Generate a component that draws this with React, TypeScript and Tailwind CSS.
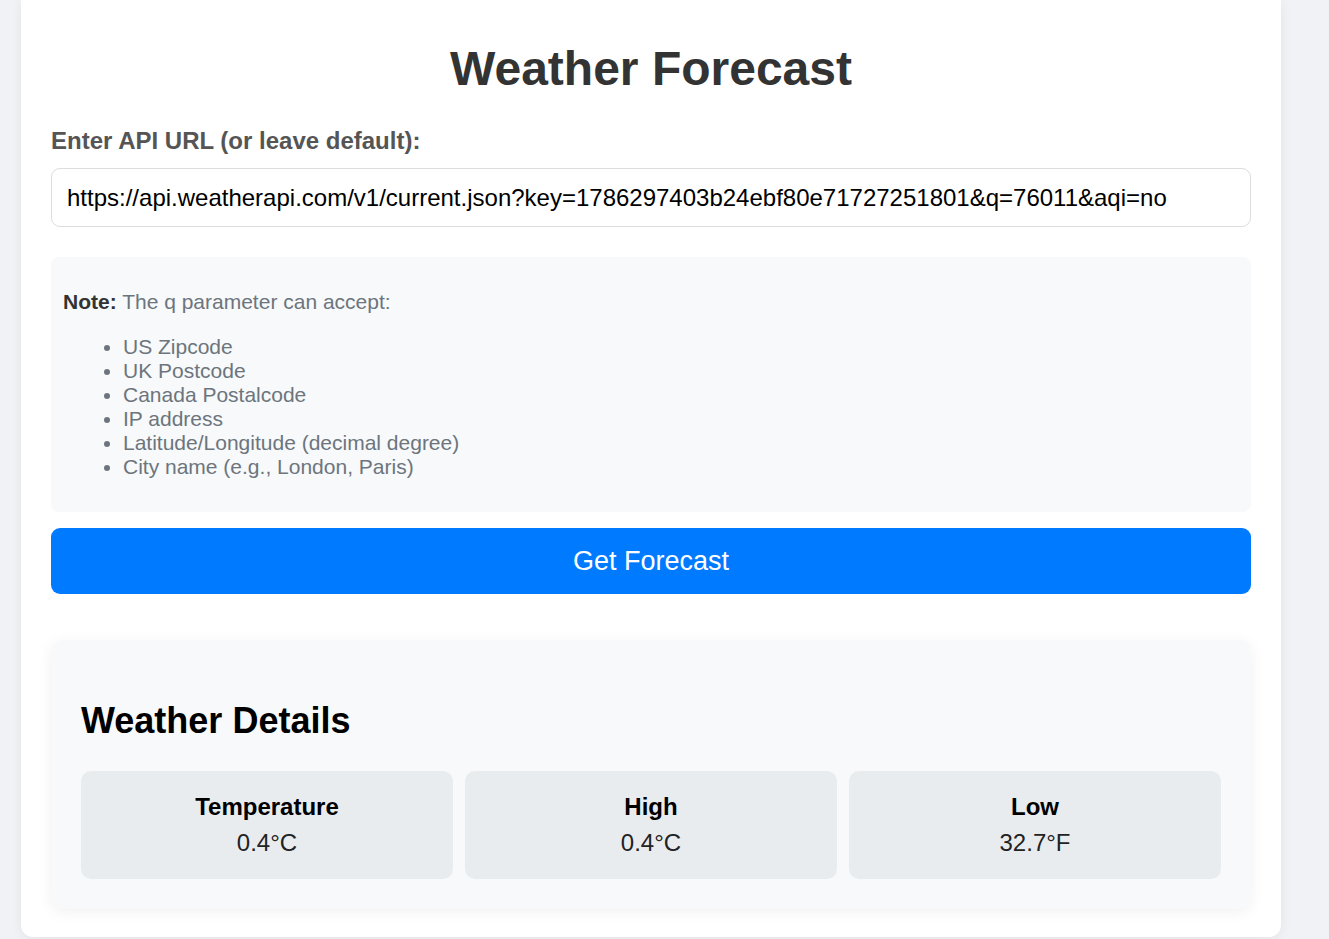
import React from 'react'

const API_URL =
  'https://api.weatherapi.com/v1/current.json?key=1786297403b24ebf80e71727251801&q=76011&aqi=no'

const queryTypes = [
  'US Zipcode',
  'UK Postcode',
  'Canada Postalcode',
  'IP address',
  'Latitude/Longitude (decimal degree)',
  'City name (e.g., London, Paris)',
]

const details = [
  { label: 'Temperature', value: '0.4°C' },
  { label: 'High', value: '0.4°C' },
  { label: 'Low', value: '32.7°F' },
]

export default function App() {
  return (
    <div className="min-h-screen w-full bg-[#f0f2f5] font-['Liberation_Sans',Arial,sans-serif]">
      <div className="ml-[21px] w-[1260px] rounded-b-[12px] bg-white px-[30px] pt-[41px] pb-[28px] shadow-[0_2px_12px_rgba(0,0,0,0.06)]">
        {/* Title */}
        <h1 className="text-center text-[48px] leading-[56px] font-bold text-[#333]">Weather Forecast</h1>

        {/* API URL */}
        <label className="mt-[30px] block text-[24px] leading-[28px] font-bold text-[#555]">
          Enter API URL (or leave default):
        </label>
        <input
          type="text"
          defaultValue={API_URL}
          className="mt-[13px] block h-[59px] w-full rounded-[9px] border border-[#ddd] bg-white px-[15px] text-[24px] text-black outline-none"
        />

        {/* Note */}
        <div className="mt-[30px] rounded-[8px] bg-[#f8f9fa] px-[12px] py-[12px] text-[21px] leading-[24px] text-[#6c757d]">
          <p className="my-[21px]">
            <strong className="text-[#333]">Note:</strong> The q parameter can accept:
          </p>
          <ul className="my-[21px] list-disc pl-[60px] marker:text-[#6c757d]">
            {queryTypes.map((item) => (
              <li key={item}>{item}</li>
            ))}
          </ul>
        </div>

        {/* Button */}
        <button className="mt-[16px] flex h-[66px] w-full items-center justify-center rounded-[9px] bg-[#007bff] text-[27px] text-white">
          Get Forecast
        </button>

        {/* Weather details */}
        <div className="mt-[46px] rounded-[12px] bg-[#f8f9fa] p-[30px] shadow-[0_3px_15px_rgba(0,0,0,0.06)]">
          <h2 className="mt-[30px] mb-[30px] text-[36px] leading-[41px] font-bold text-black">Weather Details</h2>
          <div className="grid grid-cols-3 gap-[12px]">
            {details.map((d) => (
              <div key={d.label} className="flex h-[108px] flex-col items-center rounded-[10px] bg-[#e9ecef] pt-[22px]">
                <h4 className="text-[24px] leading-[28px] font-bold text-black">{d.label}</h4>
                <p className="mt-[8px] text-[24px] leading-[28px] text-[#222]">{d.value}</p>
              </div>
            ))}
          </div>
        </div>
      </div>
    </div>
  )
}
